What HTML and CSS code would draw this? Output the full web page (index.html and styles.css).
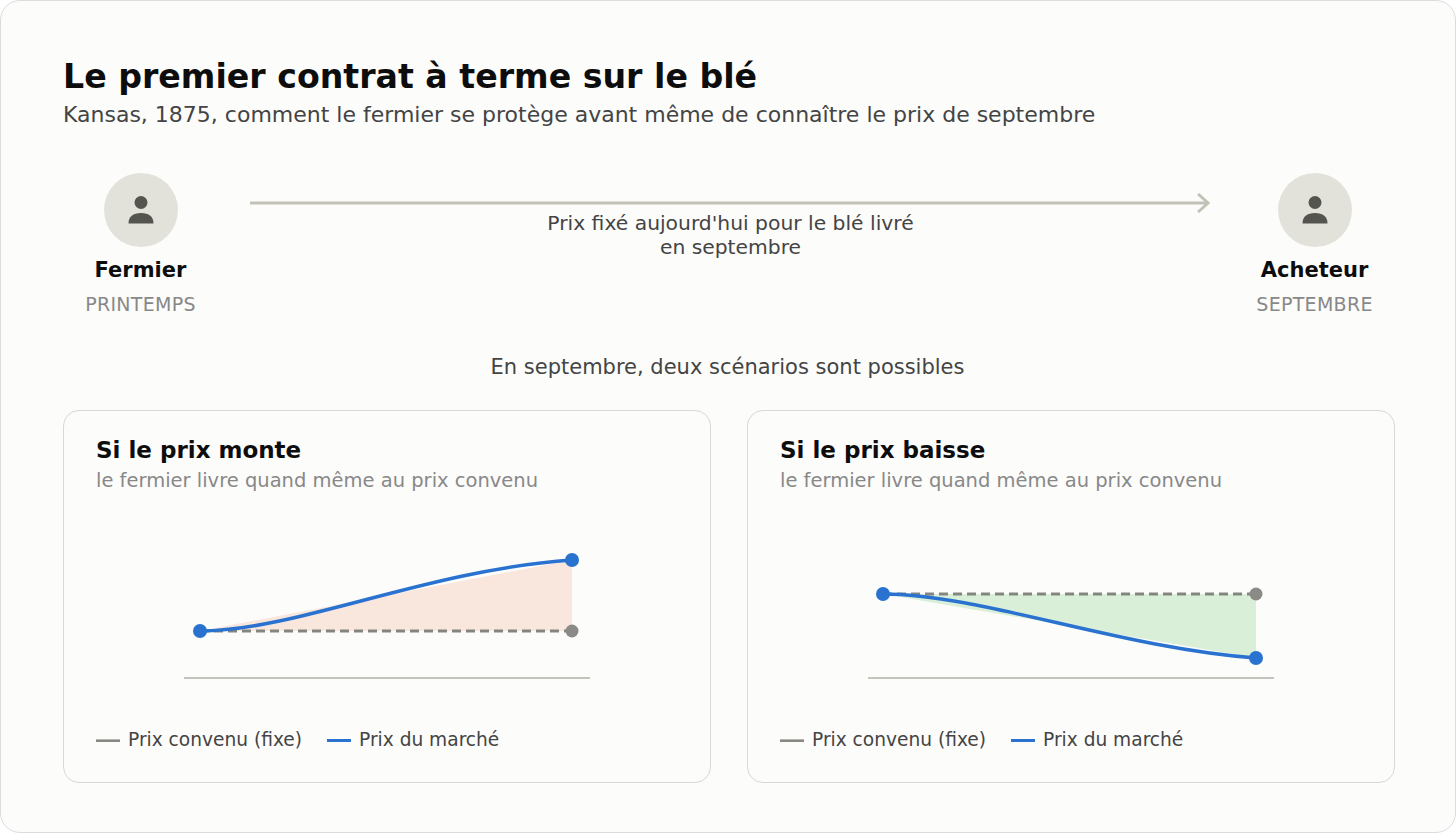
FILE: index.html
```html
<!DOCTYPE html>
<html lang="fr">
<head>
<meta charset="utf-8">
<title>Le premier contrat à terme sur le blé</title>
<link rel="stylesheet" href="styles.css">
</head>
<body>
<div class="frame">
  <header class="head">
    <h1 class="title">Le premier contrat à terme sur le blé</h1>
    <p class="subtitle">Kansas, 1875, comment le fermier se protège avant même de connaître le prix de septembre</p>
  </header>

  <section class="deal">
    <div class="party">
      <div class="avatar">
        <svg viewBox="0 0 26 28" width="26" height="28"><circle cx="13" cy="6.5" r="6.5" fill="#555550"/><path d="M0.5 27.5C0.5 20.5 5 17 13 17S25.5 20.5 25.5 27.5Z" fill="#555550"/></svg>
      </div>
      <div class="party-name">Fermier</div>
      <div class="party-season">PRINTEMPS</div>
    </div>
    <div class="link">
      <svg class="arrow" viewBox="0 0 965 20" width="965" height="20" preserveAspectRatio="none">
        <line x1="0" y1="10" x2="961" y2="10" stroke="#c2c2b6" stroke-width="3"/>
        <polyline points="952,1 962,10 952,19" fill="none" stroke="#c2c2b6" stroke-width="3"/>
      </svg>
      <p class="link-text">Prix fixé aujourd'hui pour le blé livré<br>en septembre</p>
    </div>
    <div class="party">
      <div class="avatar">
        <svg viewBox="0 0 26 28" width="26" height="28"><circle cx="13" cy="6.5" r="6.5" fill="#555550"/><path d="M0.5 27.5C0.5 20.5 5 17 13 17S25.5 20.5 25.5 27.5Z" fill="#555550"/></svg>
      </div>
      <div class="party-name">Acheteur</div>
      <div class="party-season">SEPTEMBRE</div>
    </div>
  </section>

  <p class="lead">En septembre, deux scénarios sont possibles</p>

  <section class="cards">
    <article class="card">
      <h2 class="card-title">Si le prix monte</h2>
      <p class="card-sub">le fermier livre quand même au prix convenu</p>
      <svg class="chart" viewBox="0 0 582 190" width="582" height="190">
        <polygon points="104,111 476,40 476,111" fill="#f9e6dd"/>
        <line x1="88" y1="158" x2="494" y2="158" stroke="#c4c4bc" stroke-width="2"/>
        <line x1="104" y1="111" x2="476" y2="111" stroke="#858580" stroke-width="3" stroke-dasharray="9 5"/>
        <path d="M104,111 C200,111 330,50 476,40" fill="none" stroke="#2a72d0" stroke-width="3.5"/>
        <circle cx="476" cy="111" r="6.5" fill="#8a8a86"/>
        <circle cx="104" cy="111" r="7" fill="#2a72d0"/>
        <circle cx="476" cy="40" r="7" fill="#2a72d0"/>
      </svg>
      <div class="legend">
        <span class="key"><i class="swatch swatch-fixed"></i>Prix convenu (fixe)</span>
        <span class="key"><i class="swatch swatch-market"></i>Prix du marché</span>
      </div>
    </article>
    <article class="card">
      <h2 class="card-title">Si le prix baisse</h2>
      <p class="card-sub">le fermier livre quand même au prix convenu</p>
      <svg class="chart" viewBox="0 0 582 190" width="582" height="190">
        <polygon points="103,74 476,74 476,138" fill="#d9efd8"/>
        <line x1="88" y1="158" x2="494" y2="158" stroke="#c4c4bc" stroke-width="2"/>
        <line x1="103" y1="74" x2="476" y2="74" stroke="#858580" stroke-width="3" stroke-dasharray="9 5"/>
        <path d="M103,74 C200,74 340,128 476,138" fill="none" stroke="#2a72d0" stroke-width="3.5"/>
        <circle cx="476" cy="74" r="6.5" fill="#8a8a86"/>
        <circle cx="103" cy="74" r="7" fill="#2a72d0"/>
        <circle cx="476" cy="138" r="7" fill="#2a72d0"/>
      </svg>
      <div class="legend">
        <span class="key"><i class="swatch swatch-fixed"></i>Prix convenu (fixe)</span>
        <span class="key"><i class="swatch swatch-market"></i>Prix du marché</span>
      </div>
    </article>
  </section>
</div>
</body>
</html>
```

FILE: styles.css
```css
* { box-sizing: border-box; }
html, body { margin: 0; padding: 0; background: #ffffff; }
body { font-family: "DejaVu Sans", "Noto Sans", sans-serif; color: #222; }

.frame {
  width: 1456px;
  height: 833px;
  background: #fcfcfb;
  border: 1px solid #dcdcdc;
  border-radius: 20px;
  padding: 56px 63px 0 62px;
}

.head { margin: 0; }
.title {
  margin: 0;
  font-size: 33.2px;
  line-height: 40px;
  font-weight: 700;
  color: #0d0d0d;
}
.subtitle {
  margin: 3px 0 0 0;
  font-size: 22px;
  line-height: 30px;
  color: #444;
}

.deal {
  display: flex;
  align-items: flex-start;
  margin-top: 43px;
}
.party {
  width: 155px;
  display: flex;
  flex-direction: column;
  align-items: center;
}
.avatar {
  width: 74px;
  height: 74px;
  border-radius: 50%;
  background: #e2e1da;
  display: flex;
  align-items: center;
  justify-content: center;
}
.party-name {
  margin-top: 11px;
  font-size: 21px;
  line-height: 24px;
  font-weight: 700;
  color: #0d0d0d;
}
.party-season {
  margin-top: 11px;
  font-size: 19px;
  line-height: 22px;
  color: #888;
  letter-spacing: 0.3px;
}
.link {
  flex: 1;
  margin: 20px 26px 0 32px;
  display: flex;
  flex-direction: column;
  align-items: center;
}
.arrow { display: block; width: 100%; height: 20px; }
.link-text {
  margin: -2px 0 0 0;
  text-align: center;
  font-size: 20.3px;
  line-height: 24px;
  color: #444;
}

.lead {
  margin: 38px 0 0 0;
  text-align: center;
  font-size: 21px;
  line-height: 28px;
  color: #444;
}

.cards {
  display: grid;
  grid-template-columns: 1fr 1fr;
  gap: 36px;
  margin-top: 29px;
}
.card {
  height: 373px;
  border: 1px solid #d8d8d4;
  border-radius: 16px;
  background: #fcfcfb;
  padding: 25px 32px 0 32px;
}
.card-title {
  margin: 0;
  font-size: 23px;
  line-height: 28px;
  font-weight: 700;
  color: #0d0d0d;
}
.card-sub {
  margin: 5px 0 0 0;
  font-size: 19.5px;
  line-height: 24px;
  color: #888;
}
.chart { display: block; margin-top: 27px; }
.legend {
  display: flex;
  gap: 25px;
  margin-top: 18px;
  font-size: 18.6px;
  line-height: 24px;
  color: #444;
}
.key { display: flex; align-items: center; }
.swatch { display: inline-block; width: 24px; margin-right: 8px; }
.swatch-fixed { height: 3px; background: #888884; border-top: 1px solid #b5b5b0; }
.swatch-market { height: 3px; background: #2a72d0; }
```
